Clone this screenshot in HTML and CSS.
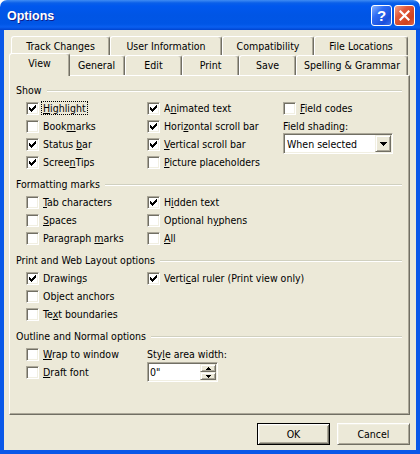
FILE: index.html
```html
<!DOCTYPE html>
<html lang="en">
<head>
    <meta charset="UTF-8">
    <meta name="viewport" content="width=device-width, initial-scale=1.0">
    <title>Options</title>
    <link rel="stylesheet" href="styles.css">
</head>
<body>
    <div class="window">
        <div class="title-bar">
            <span class="title">Options</span>
            <div class="title-buttons">
                <button class="help-btn">?</button>
                <button class="close-btn">
                    <svg width="11" height="11" viewBox="0 0 11 11"><path d="M1.5 1.5L9.5 9.5M9.5 1.5L1.5 9.5" stroke="#fff" stroke-width="2.2" stroke-linecap="square"/></svg>
                </button>
            </div>
        </div>

        <div class="frame">
            <div class="tabs">
                <div class="tab-row back">
                    <div class="tab w-track">Track Changes</div>
                    <div class="tab w-user">User Information</div>
                    <div class="tab w-compat">Compatibility</div>
                    <div class="tab w-files">File Locations</div>
                </div>
                <div class="tab-row front">
                    <div class="tab active">View</div>
                    <div class="tab">General</div>
                    <div class="tab">Edit</div>
                    <div class="tab">Print</div>
                    <div class="tab">Save</div>
                    <div class="tab wide">Spelling &amp; Grammar</div>
                </div>
            </div>

            <div class="panel">
                <!-- Show -->
                <div class="group">
                    <div class="group-title"><span>Show</span></div>
                    <div class="grid rows-4">
                        <label class="check"><span class="box on"></span><span class="focus"><u>H</u>ighlight</span></label>
                        <label class="check"><span class="box"></span><span>Book<u>m</u>arks</span></label>
                        <label class="check"><span class="box on"></span><span>Status <u>b</u>ar</span></label>
                        <label class="check"><span class="box on"></span><span>Scree<u>n</u>Tips</span></label>

                        <label class="check"><span class="box on"></span><span>A<u>n</u>imated text</span></label>
                        <label class="check"><span class="box on"></span><span>Hori<u>z</u>ontal scroll bar</span></label>
                        <label class="check"><span class="box on"></span><span><u>V</u>ertical scroll bar</span></label>
                        <label class="check"><span class="box"></span><span><u>P</u>icture placeholders</span></label>

                        <label class="check"><span class="box"></span><span><u>F</u>ield codes</span></label>
                        <div class="text">Field shadin<u>g</u>:</div>
                        <div class="select">
                            <span class="select-text">When selected</span>
                            <span class="arrow-btn">
                                <svg width="7" height="4" viewBox="0 0 7 4"><path d="M0 0h7v1h-7zM1 1h5v1h-5zM2 2h3v1h-3zM3 3h1v1h-1z" fill="#000"/></svg>
                            </span>
                        </div>
                    </div>
                </div>

                <!-- Formatting marks -->
                <div class="group">
                    <div class="group-title"><span>Formatting marks</span></div>
                    <div class="grid rows-3">
                        <label class="check"><span class="box"></span><span><u>T</u>ab characters</span></label>
                        <label class="check"><span class="box"></span><span><u>S</u>paces</span></label>
                        <label class="check"><span class="box"></span><span>Paragraph <u>m</u>arks</span></label>

                        <label class="check"><span class="box on"></span><span>H<u>i</u>dden text</span></label>
                        <label class="check"><span class="box"></span><span>Optional h<u>y</u>phens</span></label>
                        <label class="check"><span class="box"></span><span><u>A</u>ll</span></label>
                    </div>
                </div>

                <!-- Print and Web Layout options -->
                <div class="group">
                    <div class="group-title"><span>Print and Web Layout options</span></div>
                    <div class="grid rows-3">
                        <label class="check"><span class="box on"></span><span>Drawin<u>g</u>s</span></label>
                        <label class="check"><span class="box"></span><span>Ob<u>j</u>ect anchors</span></label>
                        <label class="check"><span class="box"></span><span>Te<u>x</u>t boundaries</span></label>

                        <label class="check"><span class="box on"></span><span>Verti<u>c</u>al ruler (Print view only)</span></label>
                    </div>
                </div>

                <!-- Outline and Normal options -->
                <div class="group">
                    <div class="group-title"><span>Outline and Normal options</span></div>
                    <div class="grid rows-2">
                        <label class="check"><span class="box"></span><span><u>W</u>rap to window</span></label>
                        <label class="check"><span class="box"></span><span><u>D</u>raft font</span></label>

                        <div class="text">Sty<u>l</u>e area width:</div>
                        <div class="spin">
                            <span class="spin-text">0"</span>
                            <span class="spin-btns">
                                <span class="spin-btn">
                                    <svg width="5" height="3" viewBox="0 0 5 3"><path d="M2 0h1v1h-1zM1 1h3v1h-3zM0 2h5v1h-5z" fill="#000"/></svg>
                                </span>
                                <span class="spin-btn">
                                    <svg width="5" height="3" viewBox="0 0 5 3"><path d="M0 0h5v1h-5zM1 1h3v1h-3zM2 2h1v1h-1z" fill="#000"/></svg>
                                </span>
                            </span>
                        </div>
                    </div>
                </div>
            </div>

            <div class="buttons">
                <button class="btn default">OK</button>
                <button class="btn">Cancel</button>
            </div>
        </div>
    </div>
</body>
</html>
```

FILE: styles.css
```css
* {
    box-sizing: border-box;
}

body {
    margin: 0;
    font-family: "DejaVu Sans Condensed", "DejaVu Sans", sans-serif;
    font-size: 10.5px;
    color: #000;
    background-color: #fff;
}

.window {
    width: 420px;
    height: 454px;
    display: flex;
    flex-direction: column;
}

/* title bar */
.title-bar {
    height: 30px;
    flex: none;
    display: flex;
    align-items: center;
    justify-content: space-between;
    padding: 1px 5px 0 7px;
    border-radius: 7px 7px 0 0;
    background: linear-gradient(to bottom, #3f8cf3 0px, #0a5fe9 3px, #0058ee 6px, #0055e5 50%, #0056e6 80%, #0a5ff0 90%, #0044d0 100%);
}

.title {
    color: #fff;
    font-family: "Liberation Sans", Arial, sans-serif;
    font-weight: bold;
    font-size: 12.5px;
    text-shadow: 1px 1px #0f1f8a;
    padding-top: 1px;
}

.title-buttons {
    display: flex;
    gap: 2px;
}

.help-btn,
.close-btn {
    width: 21px;
    height: 21px;
    padding: 0;
    border: 1px solid #fff;
    border-radius: 3px;
    display: flex;
    align-items: center;
    justify-content: center;
    color: #fff;
}

.help-btn {
    font-family: "Liberation Sans", Arial, sans-serif;
    font-weight: bold;
    font-size: 15px;
    background: linear-gradient(135deg, #8ab4ff 0%, #2e6cf4 35%, #1a4fdc 75%, #3c74ee 100%);
}

.close-btn {
    background: linear-gradient(135deg, #f4a48a 0%, #e2583a 35%, #cf421e 75%, #e2674a 100%);
}

/* window body */
.frame {
    flex: 1;
    display: flex;
    flex-direction: column;
    background-color: #ece9d8;
    border: 4px solid #0a58e8;
    border-top: none;
    padding: 6px 6px 5px 5px;
}

/* tabs */
.tabs {
    padding: 0 2px;
}

.tab-row {
    display: flex;
    height: 19px;
}

.tab-row.front {
    height: 20px;
}

.tab {
    flex: 0 0 57px;
    text-align: center;
    white-space: nowrap;
    line-height: 13px;
    padding-top: 3px;
    background-color: #ece9d8;
    border: 1px solid #fff;
    border-right-color: #716f64;
    border-bottom: none;
    border-radius: 3px 3px 0 0;
    box-shadow: inset -1px 0 #aca899;
}

.tab.w-track { flex-basis: 99px; }
.tab.w-user { flex-basis: 112px; }
.tab.w-compat { flex-basis: 92px; }
.tab.w-files { flex-basis: 94px; }
.tab.wide { flex-basis: 112px; }

.tab.active {
    flex-basis: 61px;
    height: 23px;
    align-self: flex-start;
    margin: -2px -2px -1px;
    position: relative;
    z-index: 1;
}

/* tab page */
.panel {
    height: 340px;
    flex: none;
    padding: 5px 7px 0 6px;
    border: 1px solid #fff;
    border-right-color: #716f64;
    border-bottom-color: #716f64;
    box-shadow: inset -1px -1px #aca899;
}

.group {
    margin-bottom: 4px;
}

.group-title {
    height: 18px;
    display: flex;
    align-items: center;
}

.group-title::after {
    content: "";
    flex: 1;
    margin-left: 5px;
    margin-top: 1px;
    border-top: 1px solid #d0d0bf;
    border-bottom: 1px solid #fff;
}

.grid {
    display: grid;
    grid-auto-flow: column;
    grid-template-columns: 121px 136px 1fr;
    padding-left: 10px;
}

.rows-4 { grid-template-rows: repeat(4, 18px); }
.rows-3 { grid-template-rows: repeat(3, 18px); }
.rows-2 { grid-template-rows: repeat(2, 18px); }

.check,
.text {
    display: flex;
    align-items: center;
    white-space: nowrap;
}

.box {
    width: 13px;
    height: 13px;
    flex: none;
    margin-right: 4px;
    background-color: #fff;
    border: 1px solid #fff;
    border-top-color: #aca899;
    border-left-color: #aca899;
    box-shadow: inset 1px 1px #716f64, inset -1px -1px #f1efe2;
}

/* classic check mark */
.box.on {
    background: #fff url("data:image/svg+xml,%3Csvg xmlns='http://www.w3.org/2000/svg' width='11' height='11' shape-rendering='crispEdges'%3E%3Cpath d='M2 4h1v3h-1zM3 5h1v3h-1zM4 6h1v3h-1zM5 5h1v3h-1zM6 4h1v3h-1zM7 3h1v3h-1zM8 2h1v3h-1z' fill='%23000'/%3E%3C/svg%3E") no-repeat 0 0;
}

.focus {
    outline: 1px dotted #000;
    line-height: 12px;
    padding: 0 1px;
    margin-left: -1px;
}

/* sunken edit fields */
.select,
.spin {
    display: flex;
    align-items: center;
    padding: 1px;
    background-color: #fff;
    border: 1px solid #fff;
    border-top-color: #aca899;
    border-left-color: #aca899;
    box-shadow: inset 1px 1px #716f64, inset -1px -1px #f1efe2;
}

.select {
    width: 110px;
    height: 21px;
    margin: -2px 0 -1px;
}

.select-text {
    flex: 1;
    padding-left: 2px;
}

.arrow-btn,
.spin-btn {
    display: flex;
    align-items: center;
    justify-content: center;
    background-color: #ece9d8;
    border: 1px solid #716f64;
    border-top-color: #f1efe2;
    border-left-color: #f1efe2;
    box-shadow: inset 1px 1px #fff, inset -1px -1px #aca899;
}

.arrow-btn {
    width: 16px;
    height: 17px;
}

.spin {
    width: 71px;
    height: 20px;
    margin: -1px 0;
}

.spin-text {
    flex: 1;
    padding-left: 1px;
}

.spin-btns {
    display: flex;
    flex-direction: column;
    width: 16px;
    height: 16px;
}

.spin-btn {
    height: 8px;
}

/* dialog buttons */
.buttons {
    display: flex;
    justify-content: flex-end;
    gap: 7px;
    margin-top: 8px;
}

.btn {
    width: 73px;
    height: 22px;
    padding: 0;
    font: inherit;
    color: #000;
    background-color: #ece9d8;
    border: 1px solid #716f64;
    border-top-color: #fff;
    border-left-color: #fff;
    box-shadow: inset 1px 1px #f1efe2, inset -1px -1px #aca899;
}

.btn.default {
    border: 1px solid #000;
    box-shadow: inset 1px 1px #fff, inset -1px -1px #716f64, inset 2px 2px #f1efe2, inset -2px -2px #aca899;
}
```
